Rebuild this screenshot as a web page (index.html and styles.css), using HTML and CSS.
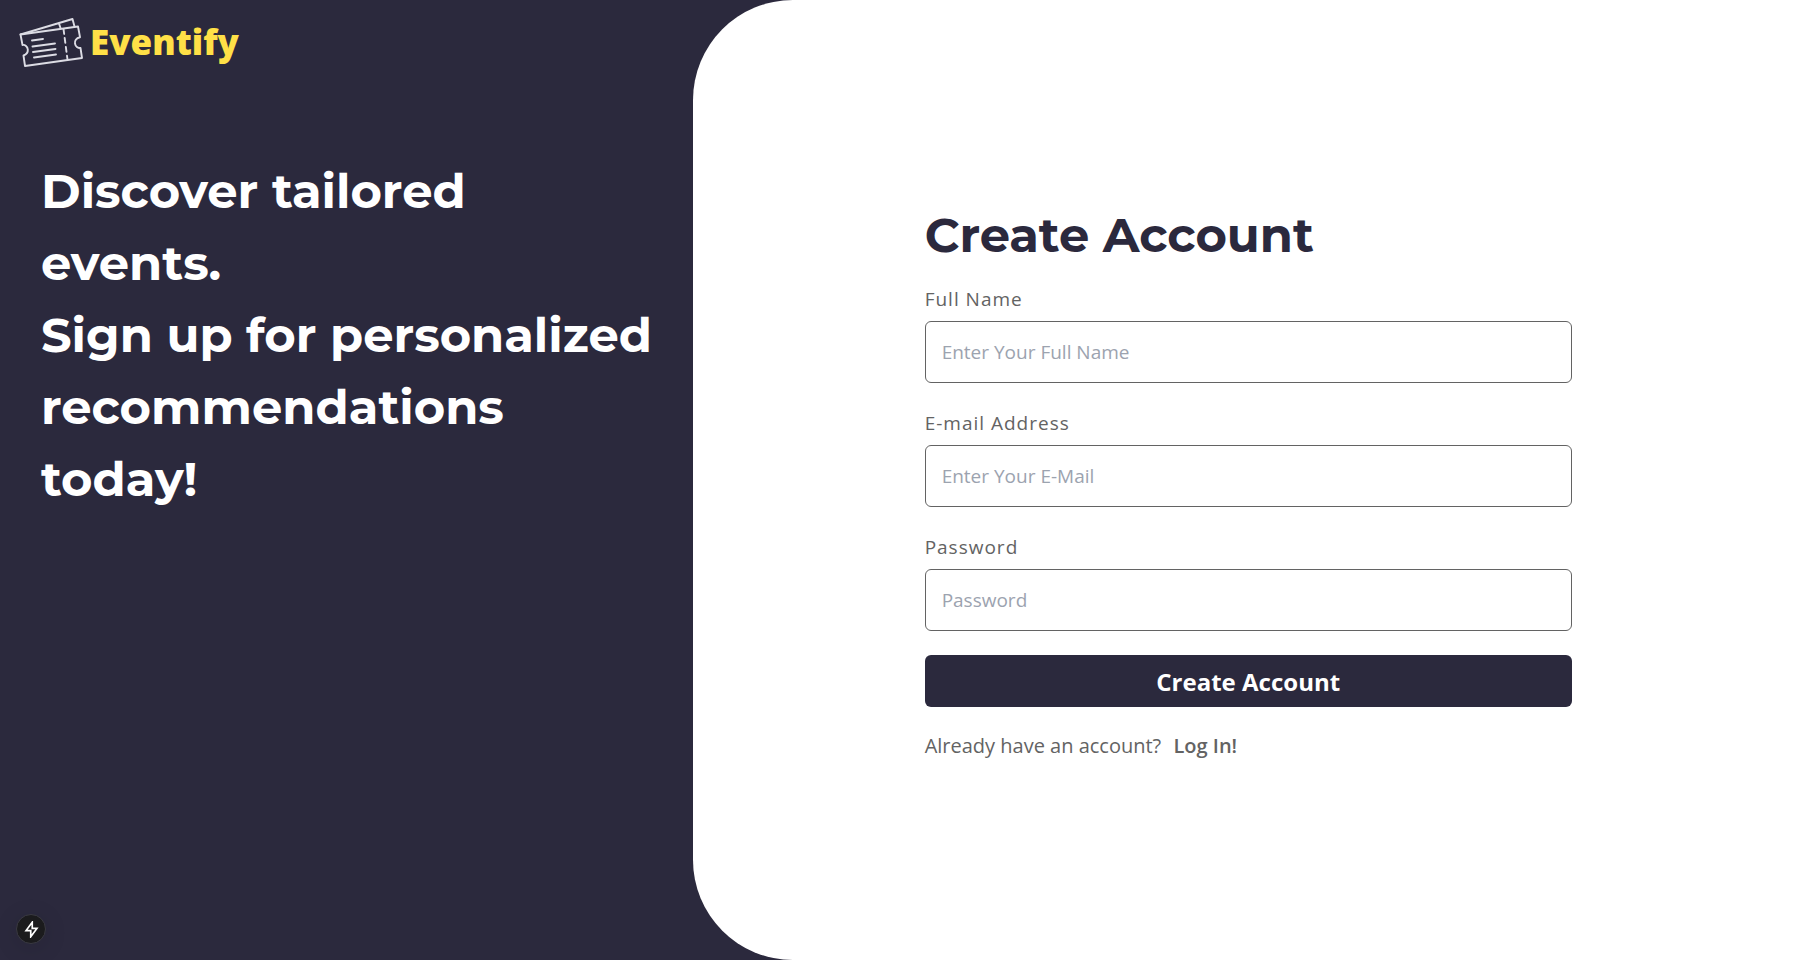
FILE: index.html
```html
<!DOCTYPE html>
<html lang="en">
<head>
<meta charset="utf-8">
<meta name="viewport" content="width=device-width, initial-scale=1">
<title>Eventify – Create Account</title>
<link rel="stylesheet" href="styles.css">
</head>
<body>
<div class="page">
  <aside class="intro">
    <a class="brand" href="#">
      <svg class="brand-icon" viewBox="0 0 66 52" fill="none" stroke="#dcdce4" stroke-width="1.9" stroke-linecap="round" stroke-linejoin="round" aria-hidden="true">
        <path d="M2.500 18.500 60 10.500 62 21.200C58 22 56.500 25 57 27.500C57.500 30.500 60 32.300 62.500 32L64 42 7 50 5.500 39.500C8.500 38.500 10 36 9.800 33.500C9.500 30.500 7 28.500 4.500 29Z"/>
        <path d="M2.500 18.500 54.500 3 56.500 10.500M41 7.500 42.500 12"/>
        <path d="M45.500 13 49.500 43.500" stroke-dasharray="5 4"/>
        <path d="M14 24.500 25 23M14.500 30.500 37 27.500M15 36 37.500 33M16 41.500 38 38.500"/>
      </svg>
      <span class="brand-name">Eventify</span>
    </a>
    <p class="tagline">Discover tailored events.<br>Sign up for personalized recommendations today!</p>
  </aside>
  <main class="panel">
    <form class="form">
      <h1 class="title">Create Account</h1>
      <div class="field">
        <label class="label" for="name">Full Name</label>
        <input class="input" id="name" type="text" placeholder="Enter Your Full Name">
      </div>
      <div class="field">
        <label class="label" for="email">E-mail Address</label>
        <input class="input" id="email" type="email" placeholder="Enter Your E-Mail">
      </div>
      <div class="field">
        <label class="label" for="password">Password</label>
        <input class="input" id="password" type="password" placeholder="Password">
      </div>
      <button class="submit" type="submit">Create Account</button>
      <p class="login">Already have an account? <a class="login-link" href="#">Log In!</a></p>
    </form>
  </main>
</div>
<button class="badge" type="button" aria-label="Developer tools">
  <svg class="badge-icon" viewBox="0 0 16 16" fill="none" stroke="#fff" stroke-width="1.600" aria-hidden="true">
    <path d="M8.700 1.200 2.900 9H7.300V14.800L13.100 7H8.700Z"/>
  </svg>
</button>
</body>
</html>
```
FILE: styles.css
```css
*, *::before, *::after {
  box-sizing: border-box;
}

body {
  margin: 0;
  background: #2b293d;
  color: #636363;
  font-family: "Open Sans", sans-serif;
  font-size: 20px;
  line-height: 30px;
}

.page {
  display: grid;
  grid-template-columns: 5fr 8fr;
  min-height: 100vh;
}

.intro {
  min-width: 0;
}

.brand {
  display: flex;
  align-items: center;
  gap: 6px;
  padding: 16px 18px;
  color: #ffe047;
  text-decoration: none;
}

.brand-icon {
  width: 66px;
  height: 52px;
}

.brand-name {
  font-family: "Noto Sans", "Open Sans", sans-serif;
  font-size: 35px;
  font-weight: 900;
  line-height: 52px;
}

.tagline {
  margin: 0;
  padding: 71px 40px 0 41px;
  color: #fff;
  font-family: Montserrat, Inter, sans-serif;
  font-size: 48px;
  font-weight: 700;
  line-height: 72px;
}

.panel {
  display: flex;
  align-items: center;
  justify-content: center;
  background: #fff;
  border-radius: 100px 0 0 100px;
}

.form {
  width: 58.33%;
}

.title {
  margin: 0 0 12px;
  color: #2b293d;
  font-family: Montserrat, Inter, sans-serif;
  font-size: 48px;
  font-weight: 700;
  line-height: 72px;
}

.field {
  display: flex;
  flex-direction: column;
  gap: 6px;
  margin-bottom: 24px;
}

.label {
  font-size: 19px;
  line-height: 32px;
  letter-spacing: 1px;
}

.input {
  width: 100%;
  height: 62px;
  padding: 0 16px;
  border: 1px solid #636363;
  border-radius: 6px;
  background: #fff;
  color: #2b293d;
  font: inherit;
  font-size: 19px;
}

.input::placeholder {
  color: #9ca3af;
  opacity: 1;
}

.submit {
  width: 100%;
  height: 52px;
  border: 0;
  border-radius: 6px;
  background: #2b293d;
  color: #fff;
  font-family: inherit;
  font-size: 24px;
  font-weight: 700;
}

.login {
  margin: 24px 0 0;
}

.login-link {
  margin-left: 7px;
  color: inherit;
  font-weight: 600;
  text-decoration: none;
}

.badge {
  position: fixed;
  bottom: 16px;
  left: 16px;
  display: flex;
  align-items: center;
  justify-content: center;
  width: 30px;
  height: 30px;
  padding: 0;
  border: 1px solid #3a3a42;
  border-radius: 50%;
  background: #1b1b1d;
  box-shadow: 0 4px 24px rgba(0, 0, 0, 0.12);
}

.badge-icon {
  width: 17px;
  height: 17px;
}
```
